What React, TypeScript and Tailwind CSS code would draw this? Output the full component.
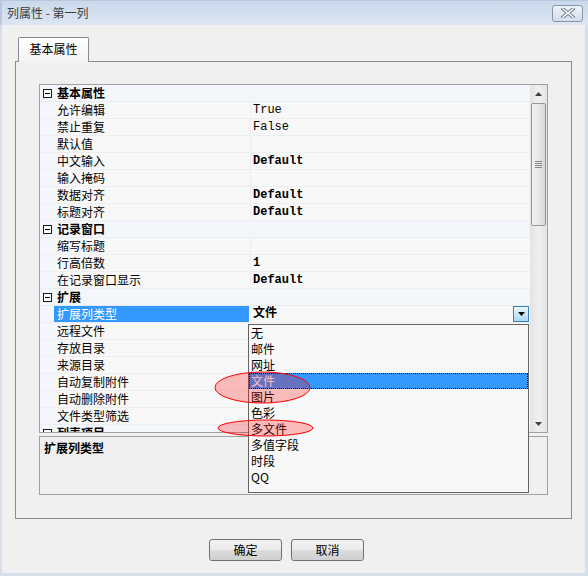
import React from "react";

type Row = {
  cat?: string;
  name?: string;
  value?: string;
  bold?: boolean;
  selected?: boolean;
};

const ROWS: Row[] = [
  { cat: "基本属性" },
  { name: "允许编辑", value: "True" },
  { name: "禁止重复", value: "False" },
  { name: "默认值" },
  { name: "中文输入", value: "Default", bold: true },
  { name: "输入掩码" },
  { name: "数据对齐", value: "Default", bold: true },
  { name: "标题对齐", value: "Default", bold: true },
  { cat: "记录窗口" },
  { name: "缩写标题" },
  { name: "行高倍数", value: "1", bold: true },
  { name: "在记录窗口显示", value: "Default", bold: true },
  { cat: "扩展" },
  { name: "扩展列类型", value: "文件", bold: true, selected: true },
  { name: "远程文件" },
  { name: "存放目录" },
  { name: "来源目录" },
  { name: "自动复制附件" },
  { name: "自动删除附件" },
  { name: "文件类型筛选" },
  { cat: "列表项目" },
];

const OPTIONS = ["无", "邮件", "网址", "文件", "图片", "色彩", "多文件", "多值字段", "时段", "QQ"];

const CollapseBox = () => (
  <span className="flex h-[9px] w-[9px] items-center justify-center border border-[#1a1a1a] bg-white">
    <span className="h-px w-[5px] bg-black" />
  </span>
);

const GridRow = ({ row }: { row: Row }) => {
  if (row.cat) {
    return (
      <div className="grid h-[17px] grid-cols-[14px_1fr] border-b border-[#e9edf2] bg-[#f3f6fb]">
        <div className="flex items-center justify-end pr-[2px]">
          <CollapseBox />
        </div>
        <div className="pl-[3px] text-[12px] leading-[16px] font-bold">{row.cat}</div>
      </div>
    );
  }
  return (
    <div className="grid h-[17px] grid-cols-[14px_196px_1fr] border-b border-[#eceef0] bg-[#f8f8f8]">
      <div className="bg-[#f3f6fb]" />
      <div className={row.selected ? "mr-px bg-[#3399ff] pl-[3px] leading-[16px] text-white" : "pl-[3px] leading-[16px]"}>
        {row.name}
      </div>
      <div className="flex items-center justify-between border-l border-[#eceef0] pl-[2px] pr-[1px]">
        <span
          className={
            "font-['Liberation_Mono','Noto_Sans_CJK_SC',monospace] text-[12px] leading-[16px] " +
            (row.bold ? "font-bold" : "")
          }
        >
          {row.value}
        </span>
        {row.selected ? (
          <span className="flex h-[16px] w-[16px] items-center justify-center border border-[#3c7fb1] bg-gradient-to-b from-[#eaf6fd] to-[#a7d9f5]">
            <svg width="7" height="4" viewBox="0 0 7 4">
              <path d="M0 0H7L3.5 4Z" fill="#000" />
            </svg>
          </span>
        ) : null}
      </div>
    </div>
  );
};

const ScrollBar = () => (
  <div className="flex w-[17px] flex-col items-center bg-gradient-to-r from-[#e3e3e3] via-[#f0f0f0] to-[#e3e3e3]">
    <div className="flex h-[17px] w-full items-center justify-center">
      <svg width="7" height="4" viewBox="0 0 7 4">
        <path d="M3.5 0L7 4H0Z" fill="#404040" />
      </svg>
    </div>
    <div className="mt-px flex h-[123px] w-[15px] items-center justify-center rounded-[2px] border border-[#979797] bg-gradient-to-r from-[#f2f2f2] via-[#e8e8e8] to-[#d6d6d6]">
      <div className="flex flex-col gap-[1px]">
        <span className="h-px w-[7px] bg-[#8a8a8a]" />
        <span className="h-px w-[7px] bg-[#8a8a8a]" />
        <span className="h-px w-[7px] bg-[#8a8a8a]" />
        <span className="h-px w-[7px] bg-[#8a8a8a]" />
      </div>
    </div>
    <div className="flex-1" />
    <div className="flex h-[17px] w-full items-center justify-center">
      <svg width="7" height="4" viewBox="0 0 7 4">
        <path d="M0 0H7L3.5 4Z" fill="#404040" />
      </svg>
    </div>
  </div>
);

const DialogButton = ({ label }: { label: string }) => (
  <button
    type="button"
    className="relative h-[22px] w-[73px] overflow-hidden rounded-[3px] border border-[#707070] bg-gradient-to-b from-[#f2f2f2] via-[#ebebeb] to-[#cfcfcf] text-[12px] leading-[20px] text-black"
  >
    <span className="absolute inset-x-0 bottom-0 h-1/2 bg-gradient-to-b from-[#dddddd] to-[#cfcfcf]" />
    <span className="relative">{label}</span>
  </button>
);

export default function App() {
  return (
    <div className="relative flex h-[576px] w-[588px] flex-col overflow-hidden bg-[#f0f0f0] font-['Noto_Sans_CJK_SC',sans-serif] text-[12px] text-black">
      {/* title bar */}
      <div className="flex h-[25px] items-center justify-between border-t border-l-2 border-[#b9c9dd] bg-gradient-to-b from-[#c9d8eb] to-[#dde7f3] pl-[5px] pr-[5px]">
        <span className="text-[12px] leading-[16px] text-[#3c3c3c]">列属性 - 第一列</span>
        <span className="flex h-[17px] w-[31px] items-center justify-center rounded-[3px] border border-[#8595ab] bg-gradient-to-b from-[#eef3f9] to-[#d2deee]">
          <svg width="14" height="10" viewBox="0 0 14 10">
            <path d="M2 1L12 9M12 1L2 9" stroke="#6d7a8c" strokeWidth="3.4" strokeLinecap="square" />
            <path d="M2 1L12 9M12 1L2 9" stroke="#ffffff" strokeWidth="1.6" strokeLinecap="square" />
          </svg>
        </span>
      </div>

      {/* body */}
      <div className="flex flex-1 flex-col border-l-2 border-r-[3px] border-b-[3px] border-[#d6e0ec]">
        {/* tab */}
        <div className="relative z-10 mt-[12px] -mb-px ml-[16px] flex h-[25px] w-[71px] items-start justify-center rounded-t-[2px] border border-b-0 border-[#898c95] bg-gradient-to-b from-[#ffffff] to-[#f4f4f4] pt-[3px]">
          <span className="leading-[16px]">基本属性</span>
        </div>
        {/* tab panel */}
        <div className="ml-[13px] flex h-[458px] w-[557px] flex-col border border-[#898c95] bg-[#f0f0f0] pl-[23px] pt-[22px]">
          {/* property grid */}
          <div className="flex h-[349px] w-[509px] border border-[#a0a0a0] bg-[#f8f8f8]">
            <div className="h-full w-[490px] overflow-hidden">
              {ROWS.map((row, i) => (
                <GridRow key={i} row={row} />
              ))}
            </div>
            <ScrollBar />
          </div>
          {/* description */}
          <div className="mt-[3px] h-[59px] w-[509px] border border-[#a0a0a0] bg-[#f0f0f0] pl-[4px] pt-[2px]">
            <span className="font-bold leading-[16px]">扩展列类型</span>
          </div>
        </div>
        {/* buttons */}
        <div className="ml-[207px] mt-[20px] flex gap-[9px]">
          <DialogButton label="确定" />
          <DialogButton label="取消" />
        </div>
      </div>

      {/* open dropdown list */}
      <div className="absolute left-[248px] top-[324px] h-[169px] w-[281px] border border-[#646464] bg-[#f8f8f8]">
        {OPTIONS.map((opt) => (
          <div
            key={opt}
            className={
              opt === "文件"
                ? "h-[16px] border border-dotted border-black bg-[#3399ff] pl-[1px] leading-[14px] text-white"
                : "h-[16px] pl-[2px] leading-[16px]"
            }
          >
            {opt}
          </div>
        ))}
      </div>

      {/* annotation marks */}
      <svg className="pointer-events-none absolute left-0 top-0" width="588" height="576">
        <ellipse cx="262.5" cy="387.5" rx="47.5" ry="15.5" fill="rgba(255,0,0,0.25)" stroke="#ff0000" strokeWidth="1" />
        <ellipse cx="265.5" cy="428" rx="47.5" ry="8" fill="rgba(255,0,0,0.25)" stroke="#ff0000" strokeWidth="1" />
      </svg>
    </div>
  );
}
